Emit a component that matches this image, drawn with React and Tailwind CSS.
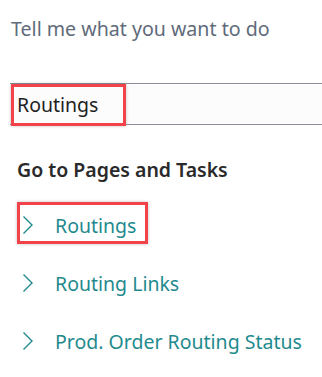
const links = ["Routings", "Routing Links", "Prod. Order Routing Status"];

function Chevron() {
  return (
    <svg width="12" height="20" viewBox="0 0 12 20" fill="none" className="mb-[3px]">
      <path d="M1.5 1.5 L10 10 L1.5 18.5" stroke="#1f8a8e" strokeWidth="1.4" />
    </svg>
  );
}

export default function App() {
  return (
    <div
      className="h-[377px] w-[322px] overflow-hidden bg-white"
      style={{ fontFamily: '"Noto Sans", "Open Sans", sans-serif' }}
    >
      <div className="pl-[11px] pt-[14px] text-[19.6px] leading-[30px] text-[#5f6b7a]">
        Tell me what you want to do
      </div>

      <div className="relative ml-[10px] mt-[39px] flex h-[42px] items-center border-y border-[#8b909a] bg-[#fcfcfc] pl-[7px] pt-[1px] text-[19.5px] text-[#1f1f1f]">
        Routings
        <div className="absolute left-[1px] top-0 h-[42px] w-[115px] border-[3px] border-[#f2424a] shadow-[0_0_3px_rgba(0,0,0,0.25)]" />
      </div>

      <div className="pl-[17px] pt-[31px] text-[19.5px] font-semibold leading-[28px] text-[#2a2a2a]">
        Go to Pages and Tasks
      </div>

      <div className="mt-[13px] flex flex-col">
        {links.map((label, i) => (
          <div key={label} className="relative flex h-[58px] items-center pl-[22px]">
            <Chevron />
            <span className="ml-[21px] text-[19.5px] text-[#1f8a8e]">{label}</span>
            {i === 0 && (
              <div className="absolute left-[17px] top-[5px] h-[42px] w-[131px] border-[3px] border-[#f2424a] shadow-[0_0_3px_rgba(0,0,0,0.25)]" />
            )}
          </div>
        ))}
      </div>
    </div>
  );
}
